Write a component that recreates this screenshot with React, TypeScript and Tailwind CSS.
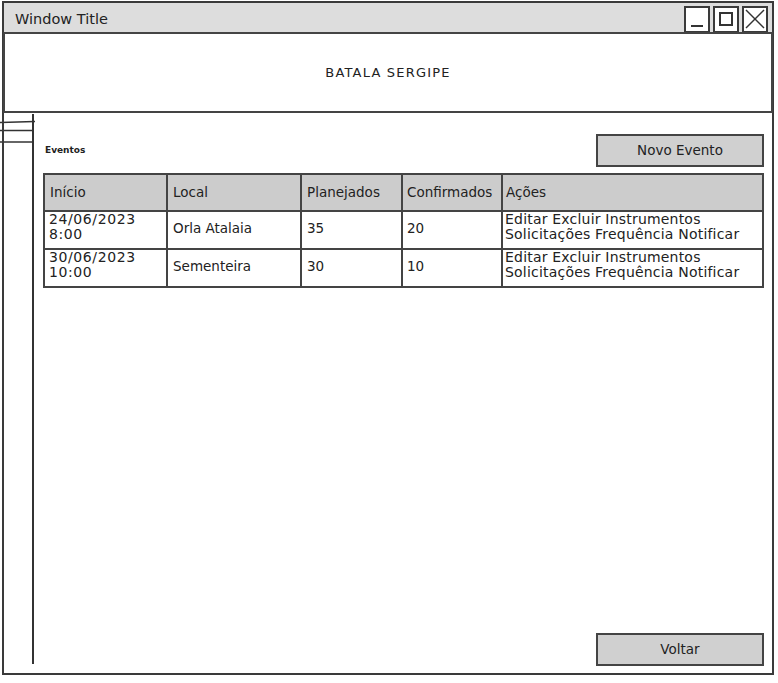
import React from "react";

const rows = [
  { inicio: ["24/06/2023", "8:00"], local: "Orla Atalaia", planejados: "35", confirmados: "20" },
  { inicio: ["30/06/2023", "10:00"], local: "Sementeira", planejados: "30", confirmados: "10" },
];

function WinButton({ children }: { children: React.ReactNode }) {
  return (
    <div className="w-[26px] h-[27px] bg-white border-2 border-[#3a3a3a] flex items-center justify-center">
      {children}
    </div>
  );
}

export default function App() {
  return (
    <div
      className="w-[778px] h-[683px] bg-white relative text-[#222]"
      style={{ fontFamily: '"DejaVu Sans", sans-serif' }}
    >
      {/* little list lines sticking out at the left */}
      <svg className="absolute left-0 top-[118px]" width="40" height="30">
        <line x1="0" y1="4.5" x2="35" y2="3.5" stroke="#333" strokeWidth="1.5" />
        <line x1="0" y1="12.5" x2="34" y2="12.5" stroke="#333" strokeWidth="1.5" />
        <line x1="0" y1="24" x2="32" y2="24" stroke="#333" strokeWidth="1.5" />
      </svg>

      <div className="absolute left-[2px] top-[1px] w-[772px] h-[674px] border-2 border-[#3a3a3a] flex flex-col">
        {/* title bar */}
        <div className="h-[29px] bg-[#dddddd] flex items-center justify-between pl-[11px] pr-[4px]">
          <span className="text-[14.5px] pt-[5px]">Window Title</span>
          <div className="flex gap-[3px] pt-[3px]">
            <WinButton>
              <div className="w-[12px] h-[2px] bg-[#333] mt-[14px]" />
            </WinButton>
            <WinButton>
              <div className="w-[14px] h-[14px] border-2 border-[#333]" />
            </WinButton>
            <WinButton>
              <svg width="20" height="20" viewBox="0 0 20 20">
                <line x1="1" y1="1" x2="19" y2="19" stroke="#333" strokeWidth="1.5" />
                <line x1="19" y1="1" x2="1" y2="19" stroke="#333" strokeWidth="1.5" />
              </svg>
            </WinButton>
          </div>
        </div>

        {/* header panel */}
        <div className="h-[81px] -ml-[1px] mr-[-1px] border-2 border-[#444] bg-white flex items-center justify-center">
          <span className="text-[13px] tracking-[1.2px]">BATALA SERGIPE</span>
        </div>

        {/* body */}
        <div className="flex-1 flex">
          <div className="w-[30px] pt-[1px] pb-[9px]">
            <div className="h-full border-r-2 border-[#333]" />
          </div>
          <div className="flex-1 pl-[9px] pr-[8px] pt-[21px] pb-[7px] flex flex-col">
            <div className="flex items-center justify-between pl-[2px]">
              <span className="text-[9px] font-bold">Eventos</span>
              <button className="w-[168px] h-[33px] bg-[#d0d0d0] border-2 border-[#444] text-[13.5px]">
                Novo Evento
              </button>
            </div>

            <table className="mt-[6px] w-[721px] border-collapse text-[13.5px]">
              <thead>
                <tr className="h-[37px] bg-[#cccccc]">
                  <th className="w-[123px] border-2 border-[#444] text-left font-normal pl-[5px]">Início</th>
                  <th className="w-[134px] border-2 border-[#444] text-left font-normal pl-[5px]">Local</th>
                  <th className="w-[101px] border-2 border-[#444] text-left font-normal pl-[5px]">Planejados</th>
                  <th className="w-[100px] border-2 border-[#444] text-left font-normal pl-[4px]">Confirmados</th>
                  <th className="border-2 border-[#444] text-left font-normal pl-[3px]">Ações</th>
                </tr>
              </thead>
              <tbody>
                {rows.map((r) => (
                  <tr key={r.local} className="h-[38px]">
                    <td className="border-2 border-[#444] align-top pl-[4px] leading-[15px] text-[14px] tracking-[0.6px]">
                      {r.inicio[0]}
                      <br />
                      {r.inicio[1]}
                    </td>
                    <td className="border-2 border-[#444] align-top pt-[6px] pl-[5px]">{r.local}</td>
                    <td className="border-2 border-[#444] align-top pt-[6px] pl-[5px]">{r.planejados}</td>
                    <td className="border-2 border-[#444] align-top pt-[6px] pl-[4px]">{r.confirmados}</td>
                    <td className="border-2 border-[#444] align-top pl-[2px] leading-[15px] text-[14px] tracking-[0.2px] whitespace-nowrap">
                      Editar Excluir Instrumentos
                      <br />
                      Solicitações Frequência Notificar
                    </td>
                  </tr>
                ))}
              </tbody>
            </table>

            <div className="flex-1" />
            <div className="flex justify-end">
              <button className="w-[168px] h-[33px] bg-[#d0d0d0] border-2 border-[#444] text-[13.5px]">
                Voltar
              </button>
            </div>
          </div>
        </div>
      </div>
    </div>
  );
}
